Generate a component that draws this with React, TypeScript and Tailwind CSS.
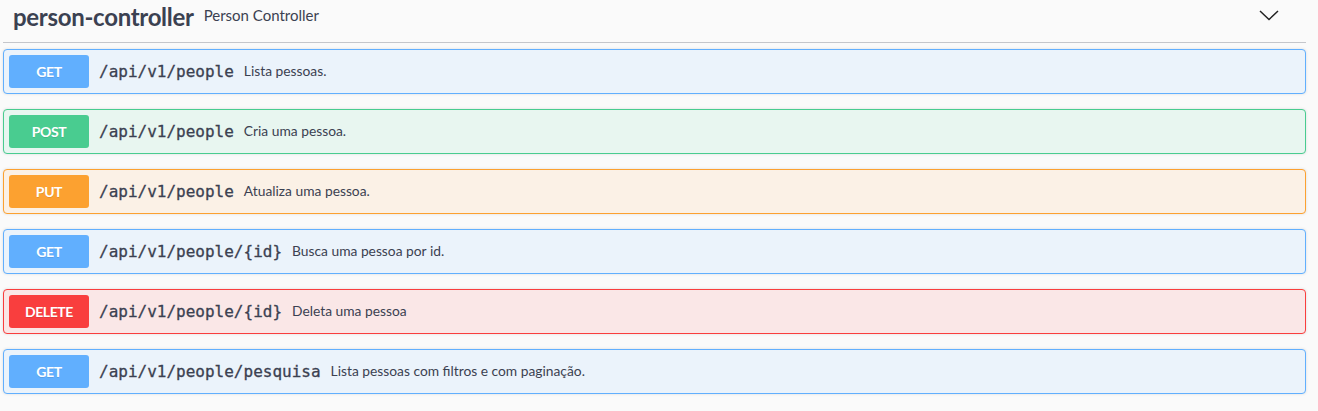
const ops = [
  { method: "GET", path: "/api/v1/people", desc: "Lista pessoas." },
  { method: "POST", path: "/api/v1/people", desc: "Cria uma pessoa." },
  { method: "PUT", path: "/api/v1/people", desc: "Atualiza uma pessoa." },
  { method: "GET", path: "/api/v1/people/{id}", desc: "Busca uma pessoa por id." },
  { method: "DELETE", path: "/api/v1/people/{id}", desc: "Deleta uma pessoa" },
  { method: "GET", path: "/api/v1/people/pesquisa", desc: "Lista pessoas com filtros e com paginação." },
];

const styles: Record<string, { block: string; badge: string }> = {
  GET: { block: "border-[#61affe] bg-[#ebf3fb]", badge: "bg-[#61affe]" },
  POST: { block: "border-[#49cc90] bg-[#e8f6f0]", badge: "bg-[#49cc90]" },
  PUT: { block: "border-[#fca130] bg-[#fbf1e6]", badge: "bg-[#fca130]" },
  DELETE: { block: "border-[#f93e3e] bg-[#fae7e7]", badge: "bg-[#f93e3e]" },
};

const sans = "font-['Lato','Open_Sans',sans-serif]";

export default function App() {
  return (
    <div className={`min-h-[411px] w-[1318px] bg-[#fafafa] pl-[3px] pr-[12px] text-[#3b4151] ${sans}`}>
      <div className="flex h-[43px] items-center border-b border-[#c4c6cb] pb-[8px] pl-[10px] pr-[27px]">
        <h4 className="text-[24px] font-bold leading-none tracking-[-0.3px] text-[#3b4151]">person-controller</h4>
        <span className="mb-[4px] px-[10px] text-[15px] leading-none">Person Controller</span>
        <div className="flex-1" />
        <svg width="20" height="20" viewBox="0 0 20 20" className="mb-[4px]">
          <path d="M1 6 L10 14.5 L19 6" fill="none" stroke="#222" strokeWidth="1.5" />
        </svg>
      </div>
      <div className="flex flex-col gap-[15px] pt-[6px]">
        {ops.map((op, i) => (
          <div
            key={i}
            className={`flex items-center rounded-[4px] border p-[5px] shadow-[0_0_3px_rgba(0,0,0,0.12)] ${styles[op.method].block}`}
          >
            <div
              className={`flex h-[33px] w-[80px] items-center justify-center rounded-[3px] text-[14px] font-bold tracking-[-0.4px] text-white [text-shadow:0_1px_0_rgba(0,0,0,0.1)] ${styles[op.method].badge}`}
            >
              {op.method}
            </div>
            <span className="px-[10px] font-['DejaVu_Sans_Mono','Liberation_Mono',monospace] text-[16px] text-[#3b4151] [-webkit-text-stroke:0.3px_#3b4151]">
              {op.path}
            </span>
            <span className="text-[13.8px] text-[#3b4151]">{op.desc}</span>
          </div>
        ))}
      </div>
    </div>
  );
}
